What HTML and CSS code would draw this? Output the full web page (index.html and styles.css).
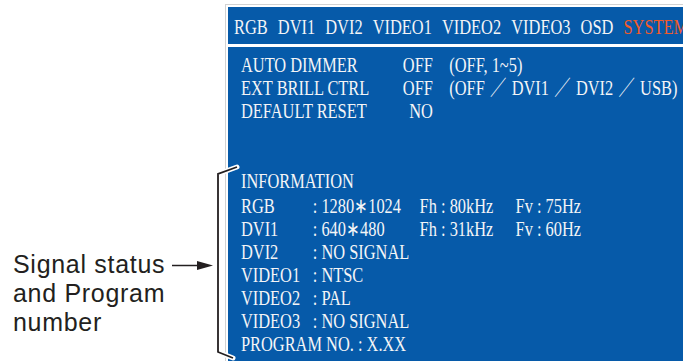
FILE: index.html
```html
<!DOCTYPE html>
<html lang="en">

<head>
    <meta charset="UTF-8">
    <meta name="viewport" content="width=device-width, initial-scale=1.0">
    <title>System menu - information</title>
    <link rel="stylesheet" href="styles.css">
</head>

<body>

    <div class="page">

        <!-- callout text on the left -->
        <div class="note">
            <p class="note-text">Signal status<br>and Program<br>number</p>
        </div>

        <div class="frame">
            <!-- menu tabs -->
            <div class="tabs">
                <div class="scaled tab-row">
                    <span>RGB</span>
                    <span>DVI1</span>
                    <span>DVI2</span>
                    <span>VIDEO1</span>
                    <span>VIDEO2</span>
                    <span>VIDEO3</span>
                    <span>OSD</span>
                    <span class="tab-active">SYSTEM</span>
                </div>
            </div>

            <!-- menu body -->
            <div class="screen">
                <div class="scaled">
                    <div class="settings">
                        <div class="set-row">
                            <span>AUTO DIMMER</span>
                            <span class="set-val">OFF</span>
                            <span class="set-opt">(OFF, 1~5)</span>
                        </div>
                        <div class="set-row">
                            <span>EXT BRILL CTRL</span>
                            <span class="set-val">OFF</span>
                            <span class="set-opt">(OFF <span class="slash">／</span> DVI1 <span class="slash">／</span> DVI2 <span class="slash">／</span> USB)</span>
                        </div>
                        <div class="set-row">
                            <span>DEFAULT RESET</span>
                            <span class="set-val">NO</span>
                            <span class="set-opt"></span>
                        </div>
                    </div>

                    <div class="info">
                        <div class="info-title">INFORMATION</div>
                        <div class="info-row">
                            <span>RGB</span>
                            <span>: 1280∗1024</span>
                            <span>Fh : 80kHz</span>
                            <span>Fv : 75Hz</span>
                        </div>
                        <div class="info-row">
                            <span>DVI1</span>
                            <span>: 640∗480</span>
                            <span>Fh : 31kHz</span>
                            <span>Fv : 60Hz</span>
                        </div>
                        <div class="info-row">
                            <span>DVI2</span>
                            <span>: NO SIGNAL</span>
                        </div>
                        <div class="info-row">
                            <span>VIDEO1</span>
                            <span>: NTSC</span>
                        </div>
                        <div class="info-row">
                            <span>VIDEO2</span>
                            <span>: PAL</span>
                        </div>
                        <div class="info-row">
                            <span>VIDEO3</span>
                            <span>: NO SIGNAL</span>
                        </div>
                        <div>PROGRAM NO. : X.XX</div>
                    </div>
                </div>
            </div>
        </div>
    </div>

    <!-- bracket and arrow drawn over the page -->
    <svg class="callout" width="683" height="361" viewBox="0 0 683 361">
        <path d="M237 167 L218 174 L218 352 L233 358" fill="none" stroke="#fff" stroke-width="5" stroke-linecap="round"/>
        <path d="M237 167 L218 174 L218 352 L233 358" fill="none" stroke="#231f20" stroke-width="1.8"/>
        <line x1="172" y1="265.5" x2="199" y2="265.5" stroke="#231f20" stroke-width="1.5"/>
        <polygon points="213,265.5 197,261 197,270" fill="#231f20"/>
    </svg>

</body>

</html>
```

FILE: styles.css
```css
html,
body {
    margin: 0;
    height: 100%;
    overflow: hidden;
    background: #fff;
}

.page {
    display: flex;
    height: 361px;
}

/* 左側の説明文 */
.note {
    flex: 0 0 225px;
    box-sizing: border-box;
    padding: 250px 0 0 13px;
}

.note-text {
    margin: 0;
    font-family: "Liberation Sans", Arial, sans-serif;
    font-size: 25px;
    line-height: 29px;
    letter-spacing: 0.7px;
    color: #231f20;
}

/* 画面の枠 */
.frame {
    flex: 1;
    min-width: 0;
    display: flex;
    flex-direction: column;
    margin-top: 4px;
    padding: 2px 0 0 2px;
    border-top: 1px solid #d2d2d2;
    border-left: 1px solid #d2d2d2;
}

.tabs {
    height: 37px;
    box-sizing: border-box;
    padding: 4px 0 0 6px;
    background-color: #065aa9;
    line-height: 33px;
}

.screen {
    flex: 1;
    margin-top: 3px;
    padding: 7px 0 0 13px;
    background-color: #065aa9;
}

/* 細長い書体に見せる */
.scaled {
    transform: scaleX(0.78);
    transform-origin: 0 0;
    font-family: "Liberation Serif", "Times New Roman", "Noto Sans CJK JP", serif;
    font-size: 21px;
    color: #f4f5f7;
    white-space: nowrap;
}

.tab-row {
    display: flex;
    gap: 13px;
}

.tab-active {
    color: #f15a29;
}

.set-row {
    display: grid;
    grid-template-columns: 205px 41px auto;
    line-height: 23px;
}

.set-val {
    text-align: right;
}

.set-opt {
    padding-left: 21px;
}

.slash {
    margin: 0 1.5px;
}

.info {
    margin-top: 47px;
    line-height: 23px;
}

.info-title {
    margin-bottom: 2px;
}

.info-row {
    display: grid;
    grid-template-columns: 92px 137px 123px auto;
}

.callout {
    position: absolute;
    top: 0;
    left: 0;
    pointer-events: none;
}
```
